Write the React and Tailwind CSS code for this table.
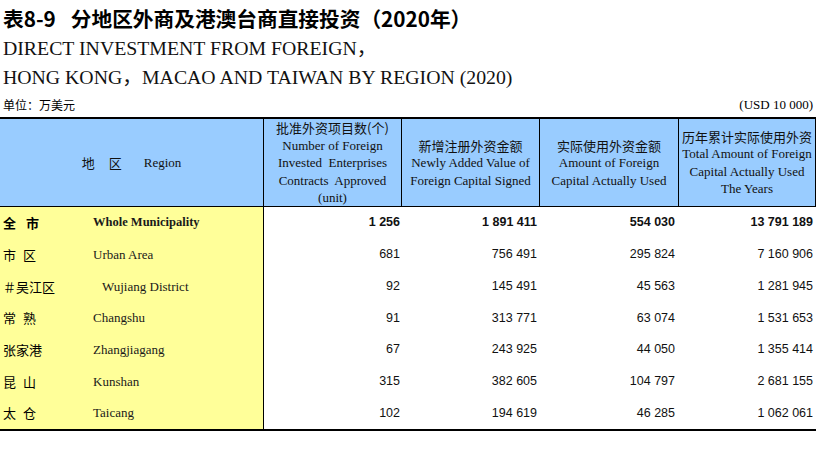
import React from "react";

const SERIF = "font-['Liberation_Serif','Noto_Sans_CJK_SC',serif]";
const CJK = "font-['Noto_Sans_CJK_SC','Liberation_Sans',sans-serif]";
const SANS = "font-['Liberation_Sans',Arial,sans-serif]";

const rows = [
  { zh: ["全", "市"], en: "Whole Municipality", v: ["1 256", "1 891 411", "554 030", "13 791 189"], bold: true },
  { zh: ["市", "区"], en: "Urban Area", v: ["681", "756 491", "295 824", "7 160 906"] },
  { zh: ["＃吴江区"], en: "Wujiang District", v: ["92", "145 491", "45 563", "1 281 945"], indent: true },
  { zh: ["常", "熟"], en: "Changshu", v: ["91", "313 771", "63 074", "1 531 653"] },
  { zh: ["张家港"], en: "Zhangjiagang", v: ["67", "243 925", "44 050", "1 355 414"] },
  { zh: ["昆", "山"], en: "Kunshan", v: ["315", "382 605", "104 797", "2 681 155"] },
  { zh: ["太", "仓"], en: "Taicang", v: ["102", "194 619", "46 285", "1 062 061"] },
];

const padR = ["pr-[2px]", "pr-[3px]", "pr-[4px]", "pr-[3px]"];

function HeadCell({ zh, en }) {
  return (
    <div className="flex flex-col items-center justify-center border-r border-black text-center text-[13px] leading-[17.5px] text-[#111]">
      <div className={`${CJK} whitespace-nowrap`}>{zh}</div>
      {en.map((l, i) => (
        <div key={i} className={`${SERIF} whitespace-pre`}>
          {l}
        </div>
      ))}
    </div>
  );
}

export default function App() {
  return (
    <div className="w-[816px] h-[464px] bg-white overflow-hidden text-black">
      <div className={`${CJK} h-[34px] pl-[3px] pt-[4px] text-[20.7px] font-bold leading-[28px] whitespace-nowrap flex`}>
        <span>表8-9</span>
        <span className="w-[15px]" />
        <span>分地区外商及港澳台商直接投资（2020年）</span>
      </div>
      <div className={`${SERIF} h-[29px] pl-[3px] text-[19.8px] leading-[29px] whitespace-nowrap text-[#111]`}>
        DIRECT INVESTMENT FROM FOREIGN，
      </div>
      <div className={`${SERIF} h-[29px] pl-[3px] text-[19.8px] leading-[29px] whitespace-nowrap text-[#111]`}>
        HONG KONG，MACAO AND TAIWAN BY REGION (2020)
      </div>
      <div className="h-[25px] flex items-center justify-between pl-[3px] pr-[3px]">
        <span className={`${CJK} text-[12px]`}>单位：万美元</span>
        <span className={`${SERIF} text-[13px]`}>(USD 10 000)</span>
      </div>

      <div className="border-t-2 border-b-2 border-black">
        <div className="grid grid-cols-[264px_138px_138px_139px_137px] h-[88px] bg-[#99ccff] border-b border-black">
          <div className="flex items-center justify-center border-r border-black text-[13px] text-[#111]">
            <span className={CJK}>地</span>
            <span className={`${CJK} ml-[14px]`}>区</span>
            <span className={`${SERIF} ml-[22px]`}>Region</span>
          </div>
          <HeadCell zh="批准外资项目数(个)" en={["Number of Foreign", "Invested  Enterprises", "Contracts  Approved", "(unit)"]} />
          <HeadCell zh="新增注册外资金额" en={["Newly Added Value of", "Foreign Capital Signed"]} />
          <HeadCell zh="实际使用外资金额" en={["Amount of Foreign", "Capital Actually Used"]} />
          <HeadCell zh="历年累计实际使用外资" en={["Total Amount of Foreign", "Capital Actually Used", "The Years"]} />
        </div>

        <div className="flex flex-col h-[222px]">
          {rows.map((r, i) => (
            <div key={i} className="flex-1 grid grid-cols-[264px_138px_138px_139px_137px]">
              <div className="bg-[#ffff99] border-r border-black flex items-center">
                <div className={`${CJK} w-[90px] pl-[3px] flex text-[13px] ${r.bold ? "font-bold gap-[10px]" : "gap-[7px]"}`}>
                  {r.zh.map((c, j) => (
                    <span key={j}>{c}</span>
                  ))}
                </div>
                <div
                  className={`${SERIF} ${r.indent ? "pl-[12px]" : "pl-[3px]"} ${r.bold ? "font-bold text-[12.5px]" : "text-[13px]"} text-[#1a1a1a] whitespace-nowrap`}
                >
                  {r.en}
                </div>
              </div>
              {r.v.map((n, j) => (
                <div
                  key={j}
                  className={`${SANS} flex items-center justify-end ${padR[j]} text-[12.5px] ${r.bold ? "font-bold" : ""} text-[#111]`}
                >
                  {n}
                </div>
              ))}
            </div>
          ))}
        </div>
      </div>
    </div>
  );
}
